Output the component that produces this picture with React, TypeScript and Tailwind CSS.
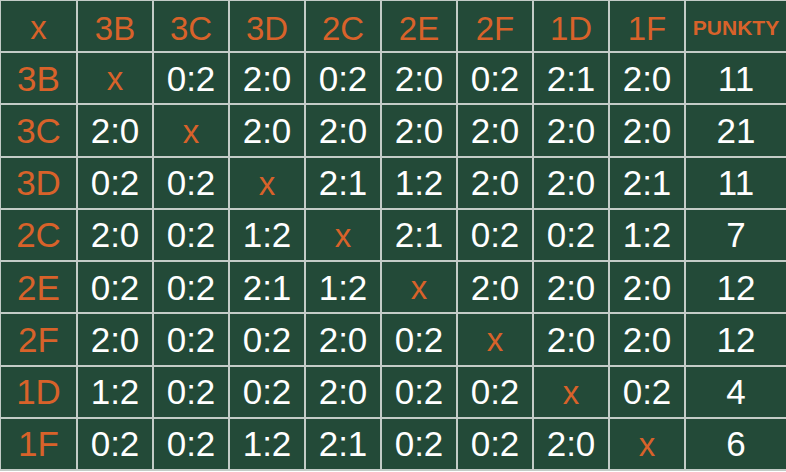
const teams = ['3B', '3C', '3D', '2C', '2E', '2F', '1D', '1F'];

const results: string[][] = [
  ['x', '0:2', '2:0', '0:2', '2:0', '0:2', '2:1', '2:0', '11'],
  ['2:0', 'x', '2:0', '2:0', '2:0', '2:0', '2:0', '2:0', '21'],
  ['0:2', '0:2', 'x', '2:1', '1:2', '2:0', '2:0', '2:1', '11'],
  ['2:0', '0:2', '1:2', 'x', '2:1', '0:2', '0:2', '1:2', '7'],
  ['0:2', '0:2', '2:1', '1:2', 'x', '2:0', '2:0', '2:0', '12'],
  ['2:0', '0:2', '0:2', '2:0', '0:2', 'x', '2:0', '2:0', '12'],
  ['1:2', '0:2', '0:2', '2:0', '0:2', '0:2', 'x', '0:2', '4'],
  ['0:2', '0:2', '1:2', '2:1', '0:2', '0:2', '2:0', 'x', '6'],
];

function Cell({ value, header }: { value: string; header?: boolean }) {
  const isX = value === 'x';
  return (
    <div className="flex items-center justify-center bg-[#234a38] leading-none">
      {isX ? (
        <span className="text-[33px] text-[#d8622a] pt-[1px]">x</span>
      ) : header ? (
        <span className="text-[35px] text-[#d8622a]">{value}</span>
      ) : (
        <span className="text-[35px] text-white">{value}</span>
      )}
    </div>
  );
}

export default function App() {
  return (
    <div
      className="h-[471px] w-[786px] bg-[#c3ccc7] pl-px pt-px pb-[2px] grid grid-cols-[75px_74px_74px_74px_74px_74px_74px_74px_74px_1fr] grid-rows-9 gap-[2px]"
      style={{ fontFamily: '"Liberation Sans", Arial, sans-serif' }}
    >
      {/* header row */}
      <div className="flex items-center justify-center bg-[#234a38] leading-none pt-[2px]">
        <span className="text-[33px] text-[#d8622a]">x</span>
      </div>
      {teams.map((t) => (
        <div key={t} className="flex items-center justify-center bg-[#234a38] leading-none pt-[5px]">
          <span className="text-[33px] text-[#d8622a]">{t}</span>
        </div>
      ))}
      <div className="flex items-center justify-center bg-[#234a38] leading-none pt-[2px]">
        <span className="text-[21px] font-bold text-[#d8622a]">PUNKTY</span>
      </div>

      {results.map((row, i) => (
        <>
          <Cell key={`l${i}`} value={teams[i]} header />
          {row.map((v, j) => (
            <Cell key={`${i}-${j}`} value={v} />
          ))}
        </>
      ))}
    </div>
  );
}
